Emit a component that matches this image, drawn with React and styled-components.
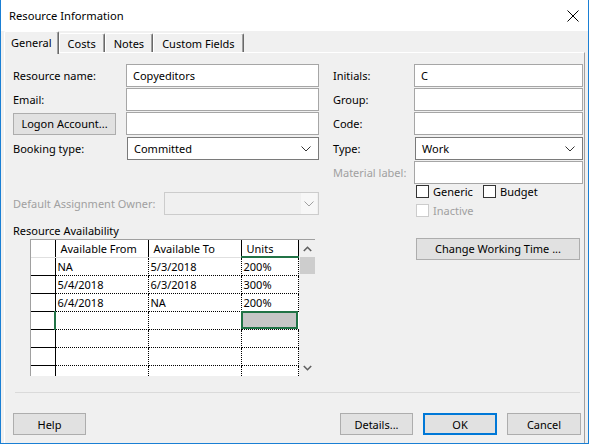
import styled, { createGlobalStyle } from 'styled-components';

const GlobalStyle = createGlobalStyle`
  body {
    margin: 0;
    background: #ffffff;
    font-family: "Noto Sans", "Open Sans", sans-serif;
    font-size: 11px;
    color: #000000;
  }
`;

const Window = styled.div`
  box-sizing: border-box;
  width: 589px;
  height: 444px;
  border: 1px solid #1a7fd4;
  border-top: none;
  display: flex;
  flex-direction: column;
  background: #f0f0f0;
`;

const TitleBar = styled.div`
  height: 31px;
  background: #ffffff;
  display: flex;
  align-items: center;
  justify-content: space-between;
  padding: 0 8px 0 8px;
  font-size: 11.2px;
  flex-shrink: 0;
`;

const CloseBtn = styled.div`
  width: 14px;
  height: 14px;
  display: flex;
  align-items: center;
  justify-content: center;
`;

const Body = styled.div`
  flex: 1;
  display: flex;
  flex-direction: column;
  padding: 0 3px 0 3px;
`;

const TabStrip = styled.div`
  display: flex;
  align-items: flex-end;
  height: 21px;
  padding-left: 1px;
  position: relative;
  z-index: 1;
`;

const Tab = styled.div`
  box-sizing: border-box;
  height: ${p => (p.$active ? '23px' : '19px')};
  margin-bottom: ${p => (p.$active ? '-2px' : '0')};
  padding: ${p => (p.$active ? '3px 6px 0 6px' : '2px 8px 0 8px')};
  background: #f0f0f0;
  border-top: 1px solid #ffffff;
  border-left: 1px solid #ffffff;
  border-right: 1px solid #696969;
  box-shadow: inset -1px 0 0 #a0a0a0;
  border-radius: 2px 2px 0 0;
  margin-left: ${p => (p.$active ? '-1px' : '0')};
  white-space: nowrap;
`;

const Panel = styled.div`
  flex: 1;
  box-sizing: border-box;
  border-top: 1px solid #ffffff;
  border-left: 1px solid #ffffff;
  border-right: 1px solid #a0a0a0;
  display: flex;
  flex-direction: column;
  padding: 11px 1px 0 8px;
`;

const Columns = styled.div`
  display: flex;
  height: 328px;
`;

const LeftCol = styled.div`
  width: 306px;
  display: flex;
  flex-direction: column;
`;

const RightCol = styled.div`
  margin-left: 14px;
  width: 250px;
  display: flex;
  flex-direction: column;
`;

const Row = styled.div`
  display: flex;
  align-items: center;
  height: 23px;
  margin-bottom: ${p => p.$gap || 1}px;
  margin-top: ${p => p.$top || 0}px;
`;

const Label = styled.div`
  width: ${p => p.$w}px;
  flex-shrink: 0;
  color: ${p => (p.$disabled ? '#a0a0a0' : '#000000')};
  white-space: nowrap;
`;

const TextBox = styled.div`
  box-sizing: border-box;
  flex: 1;
  height: 23px;
  background: #ffffff;
  border: 1px solid #a6a6a6;
  padding: 0 6px;
  display: flex;
  align-items: center;
`;

const Select = styled.div`
  box-sizing: border-box;
  flex: 1;
  height: 23px;
  background: ${p => (p.$disabled ? '#f0f0f0' : '#ffffff')};
  border: 1px solid ${p => (p.$disabled ? '#cccccc' : '#7a7a7a')};
  padding: 0 7px 0 6px;
  display: flex;
  align-items: center;
  justify-content: space-between;
`;

const ArrowBox = styled.div`
  display: flex;
  align-items: center;
  justify-content: center;
  width: 16px;
  height: 100%;
  margin-right: -6px;
  background: ${p => (p.$disabled ? '#f7f7f7' : 'transparent')};
`;

const Button = styled.div`
  box-sizing: border-box;
  width: ${p => p.$w}px;
  height: 22px;
  background: #e1e1e1;
  border: ${p => (p.$default ? '2px solid #0078d7' : '1px solid #adadad')};
  display: flex;
  align-items: center;
  justify-content: center;
  white-space: nowrap;
  flex-shrink: 0;
`;

const SectionTitle = styled.div`
  margin-top: 7px;
  height: 16px;
  line-height: 16px;
`;

const GridWrap = styled.div`
  margin-left: 17px;
  margin-top: 0;
  width: 285px;
  height: 137px;
  display: flex;
  border-left: 1px solid #a0a0a0;
  border-top: 1px solid #a0a0a0;
  box-sizing: border-box;
  overflow: hidden;
  background: #ffffff;
`;

const Table = styled.table`
  border-collapse: collapse;
  table-layout: fixed;
  width: 267px;
  font-size: 11px;
`;

const Th = styled.th`
  box-sizing: border-box;
  height: 17px;
  font-weight: normal;
  text-align: left;
  padding: 0 5px;
  border-right: 1px solid #000000;
  border-bottom: ${p => (p.$sel ? '2px solid #217346' : '1px solid #e0e0e0')};
  white-space: nowrap;
  overflow: hidden;
`;

const RowHead = styled.td`
  box-sizing: border-box;
  height: 18px;
  padding: 0;
  border-bottom: 1px solid #000000;
  border-right: ${p => (p.$sel ? '2px solid #217346' : '1px solid #000000')};
`;

const Td = styled.td`
  box-sizing: border-box;
  height: 18px;
  padding: 0 2px;
  border-right: 1px dotted #000000;
  border-bottom: 1px dotted #000000;
  white-space: nowrap;
  overflow: hidden;
`;

const SelCell = styled.td`
  box-sizing: border-box;
  height: 18px;
  padding: 0;
  background: #c6c6c6;
  outline: 2px solid #217346;
  outline-offset: -2px;
  border-bottom: 1px dotted #000000;
`;

const ScrollBar = styled.div`
  width: 17px;
  flex-shrink: 0;
  background: #f0f0f0;
  display: flex;
  flex-direction: column;
  align-items: center;
`;

const ScrollBtn = styled.div`
  height: 17px;
  width: 17px;
  display: flex;
  align-items: center;
  justify-content: center;
`;

const Thumb = styled.div`
  width: 15px;
  height: 17px;
  background: #cdcdcd;
`;

const CheckRow = styled.div`
  display: flex;
  align-items: center;
  height: 18px;
  margin-left: 83px;
  margin-top: ${p => p.$top || 0}px;
`;

const CheckItem = styled.div`
  display: flex;
  align-items: center;
  width: ${p => p.$w || 'auto'};
  color: ${p => (p.$disabled ? '#a0a0a0' : '#000000')};
`;

const Box = styled.div`
  box-sizing: border-box;
  width: 13px;
  height: 13px;
  background: #ffffff;
  border: 1px solid ${p => (p.$disabled ? '#cccccc' : '#333333')};
  margin-right: 4px;
`;

const Separator = styled.div`
  height: 1px;
  background: #dadada;
  margin: 0 3px 0 2px;
`;

const Footer = styled.div`
  display: flex;
  align-items: center;
  margin-top: 20px;
  padding-right: 2px;
  gap: 10px;
`;

const Spacer = styled.div`
  flex: ${p => (p.$w ? `0 0 ${p.$w}px` : 1)};
`;

const Chevron = ({ color = '#333333' }) => (
  <svg width="10" height="6" viewBox="0 0 10 6">
    <path d="M0.5 0.5 L5 5 L9.5 0.5" fill="none" stroke={color} strokeWidth="1" />
  </svg>
);

const ChevronUp = () => (
  <svg width="9" height="6" viewBox="0 0 9 6">
    <path d="M0.8 5 L4.5 1.3 L8.2 5" fill="none" stroke="#606060" strokeWidth="1.6" />
  </svg>
);

const ChevronDown = () => (
  <svg width="9" height="6" viewBox="0 0 9 6">
    <path d="M0.8 1 L4.5 4.7 L8.2 1" fill="none" stroke="#606060" strokeWidth="1.6" />
  </svg>
);

const rows = [
  ['NA', '5/3/2018', '200%'],
  ['5/4/2018', '6/3/2018', '300%'],
  ['6/4/2018', 'NA', '200%'],
];

const App = () => {
  return (
    <>
      <GlobalStyle />
      <Window>
        <TitleBar>
          <span>Resource Information</span>
          <CloseBtn>
            <svg width="12" height="12" viewBox="0 0 12 12">
              <path d="M0.5 0.5 L11.5 11.5 M11.5 0.5 L0.5 11.5" stroke="#000" strokeWidth="1" />
            </svg>
          </CloseBtn>
        </TitleBar>
        <Body>
          <TabStrip>
            <Tab $active>General</Tab>
            <Tab>Costs</Tab>
            <Tab>Notes</Tab>
            <Tab>Custom Fields</Tab>
          </TabStrip>
          <Panel>
            <Columns>
              <LeftCol>
                <Row>
                  <Label $w={113}>Resource name:</Label>
                  <TextBox>Copyeditors</TextBox>
                </Row>
                <Row $gap={1}>
                  <Label $w={113}>Email:</Label>
                  <TextBox />
                </Row>
                <Row $gap={2}>
                  <Label $w={113}>
                    <Button $w={103}>Logon Account...</Button>
                  </Label>
                  <TextBox />
                </Row>
                <Row>
                  <Label $w={114}>Booking type:</Label>
                  <Select>
                    <span>Committed</span>
                    <Chevron />
                  </Select>
                </Row>
                <Row $top={31}>
                  <Label $w={151} $disabled>Default Assignment Owner:</Label>
                  <Select $disabled>
                    <span />
                    <ArrowBox $disabled>
                      <Chevron color="#a0a0a0" />
                    </ArrowBox>
                  </Select>
                </Row>
                <SectionTitle>Resource Availability</SectionTitle>
                <GridWrap>
                  <Table>
                    <colgroup>
                      <col style={{ width: 24 }} />
                      <col style={{ width: 93 }} />
                      <col style={{ width: 93 }} />
                      <col style={{ width: 57 }} />
                    </colgroup>
                    <thead>
                      <tr>
                        <Th />
                        <Th>Available From</Th>
                        <Th>Available To</Th>
                        <Th $sel>Units</Th>
                      </tr>
                    </thead>
                    <tbody>
                      {rows.map((r, i) => (
                        <tr key={i}>
                          <RowHead />
                          <Td>{r[0]}</Td>
                          <Td>{r[1]}</Td>
                          <Td>{r[2]}</Td>
                        </tr>
                      ))}
                      <tr>
                        <RowHead $sel />
                        <Td />
                        <Td />
                        <SelCell />
                      </tr>
                      {[0, 1, 2].map(i => (
                        <tr key={'e' + i}>
                          <RowHead />
                          <Td />
                          <Td />
                          <Td />
                        </tr>
                      ))}
                    </tbody>
                  </Table>
                  <ScrollBar>
                    <ScrollBtn><ChevronUp /></ScrollBtn>
                    <Thumb />
                    <Spacer />
                    <ScrollBtn><ChevronDown /></ScrollBtn>
                  </ScrollBar>
                </GridWrap>
              </LeftCol>
              <RightCol>
                <Row>
                  <Label $w={81}>Initials:</Label>
                  <TextBox>C</TextBox>
                </Row>
                <Row $gap={1}>
                  <Label $w={81}>Group:</Label>
                  <TextBox />
                </Row>
                <Row $gap={2}>
                  <Label $w={81}>Code:</Label>
                  <TextBox />
                </Row>
                <Row>
                  <Label $w={82}>Type:</Label>
                  <Select>
                    <span>Work</span>
                    <Chevron />
                  </Select>
                </Row>
                <Row>
                  <Label $w={81} $disabled>Material label:</Label>
                  <TextBox />
                </Row>
                <CheckRow $top={-3}>
                  <CheckItem $w="67px"><Box />Generic</CheckItem>
                  <CheckItem><Box />Budget</CheckItem>
                </CheckRow>
                <CheckRow $top={1}>
                  <CheckItem $disabled><Box $disabled />Inactive</CheckItem>
                </CheckRow>
                <Row $top={18}>
                  <Spacer $w={83} />
                  <Button $w={164}>Change Working Time ...</Button>
                </Row>
              </RightCol>
            </Columns>
            <Separator />
            <Footer>
              <Button $w={73}>Help</Button>
              <Spacer />
              <Button $w={73}>Details...</Button>
              <Button $w={74} $default>OK</Button>
              <Button $w={74}>Cancel</Button>
            </Footer>
          </Panel>
        </Body>
      </Window>
    </>
  );
};

export default App;
